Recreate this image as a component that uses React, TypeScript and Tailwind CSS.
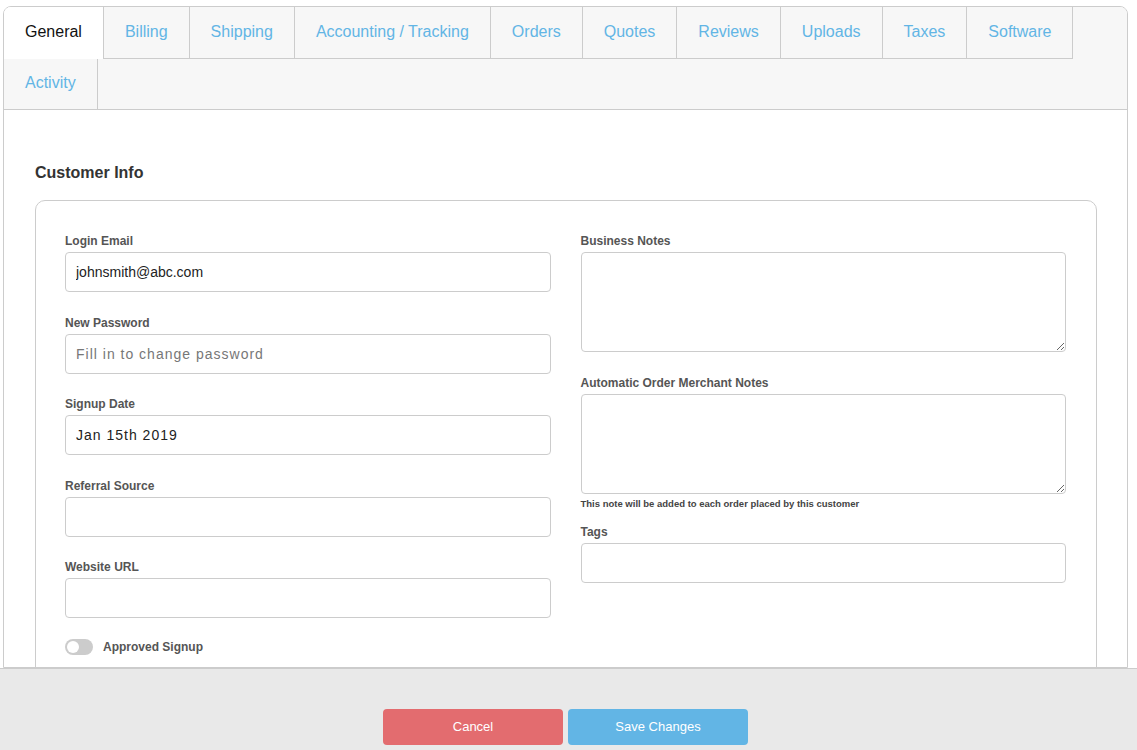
const tabs = [
  "General",
  "Billing",
  "Shipping",
  "Accounting / Tracking",
  "Orders",
  "Quotes",
  "Reviews",
  "Uploads",
  "Taxes",
  "Software",
];

function Label({ children }: { children: React.ReactNode }) {
  return (
    <label className="block text-[12px] leading-[15px] font-bold text-[#555] mb-[3px]">
      {children}
    </label>
  );
}

function Field({
  label,
  value,
  placeholder,
  spaced,
}: {
  label: string;
  value?: string;
  placeholder?: string;
  spaced?: boolean;
}) {
  return (
    <div className="mb-[23.5px]">
      <Label>{label}</Label>
      <input
        type="text"
        defaultValue={value}
        placeholder={placeholder}
        className={
          "block w-full h-[40px] rounded-[4px] border border-[#ccc] bg-white px-[10px] text-[14px] text-[#222] placeholder:text-[#777] outline-none " +
          (spaced ? "tracking-[1px]" : "")
        }
      />
    </div>
  );
}

function Notes({ label }: { label: string }) {
  return (
    <div>
      <Label>{label}</Label>
      <textarea className="block w-full h-[100px] rounded-[4px] border border-[#ccc] bg-white px-[10px] py-[8px] text-[14px] outline-none" />
    </div>
  );
}

export default function App() {
  return (
    <div className="h-screen flex flex-col bg-white font-['Liberation_Sans',Arial,sans-serif] overflow-hidden">
      <main className="flex-1 overflow-hidden pt-[6px] pl-[3px] pr-[9px]">
        <div className="h-full border border-[#ccc] rounded-t-[8px] overflow-hidden">
          {/* tab bar */}
          <div className="flex flex-wrap bg-[#f7f7f7] border-b border-[#ccc]">
            {tabs.map((t, i) => (
              <div
                key={t}
                className={
                  i === 0
                    ? "h-[52px] px-[21px] flex items-center pb-[2px] bg-white border-r border-[#ccc] text-[16px] text-[#111]"
                    : "h-[52px] px-[21px] flex items-center pb-[2px] border-r border-b border-[#ccc] text-[16px] text-[#62b5e5]"
                }
              >
                {t}
              </div>
            ))}
            <div className="h-[50px] px-[21px] flex items-center pb-[2px] border-r border-[#ccc] text-[16px] text-[#62b5e5]">
              Activity
            </div>
          </div>

          <div className="pl-[31px] pr-[30px] pt-[54px]">
            <h2 className="text-[16px] leading-[18px] font-bold text-[#333] mb-[18px]">Customer Info</h2>

            <div className="border border-[#ccc] rounded-[10px] pl-[29px] pr-[30px] pt-[33px] pb-[30px] grid grid-cols-2 gap-x-[30px]">
              <div>
                <Field label="Login Email" value="johnsmith@abc.com" />
                <Field label="New Password" placeholder="Fill in to change password" spaced />
                <Field label="Signup Date" value="Jan 15th 2019" spaced />
                <Field label="Referral Source" />
                <Field label="Website URL" />
                <div className="flex items-center gap-[10px] -mt-[4px]">
                  <div className="w-[28px] h-[16px] rounded-full bg-[#ccc] p-[2px] flex items-center">
                    <div className="w-[12px] h-[12px] rounded-full bg-white" />
                  </div>
                  <span className="text-[12px] font-bold text-[#555]">Approved Signup</span>
                </div>
              </div>

              <div>
                <div className="mb-[23.5px]">
                  <Notes label="Business Notes" />
                </div>
                <Notes label="Automatic Order Merchant Notes" />
                <p className="text-[9.5px] leading-[12px] font-bold text-[#444] mt-[4px] mb-[15px]">
                  This note will be added to each order placed by this customer
                </p>
                <Field label="Tags" />
              </div>
            </div>
          </div>
        </div>
      </main>

      <footer className="h-[82px] shrink-0 bg-[#e9e9e9] border-t border-[#ccc] flex justify-center items-start gap-[5px] pt-[40px] pr-[6px]">
        <button className="w-[180px] h-[36px] rounded-[4px] bg-[#e36c6f] text-white text-[13px]">Cancel</button>
        <button className="w-[180px] h-[36px] rounded-[4px] bg-[#62b5e5] text-white text-[13px]">Save Changes</button>
      </footer>
    </div>
  );
}
